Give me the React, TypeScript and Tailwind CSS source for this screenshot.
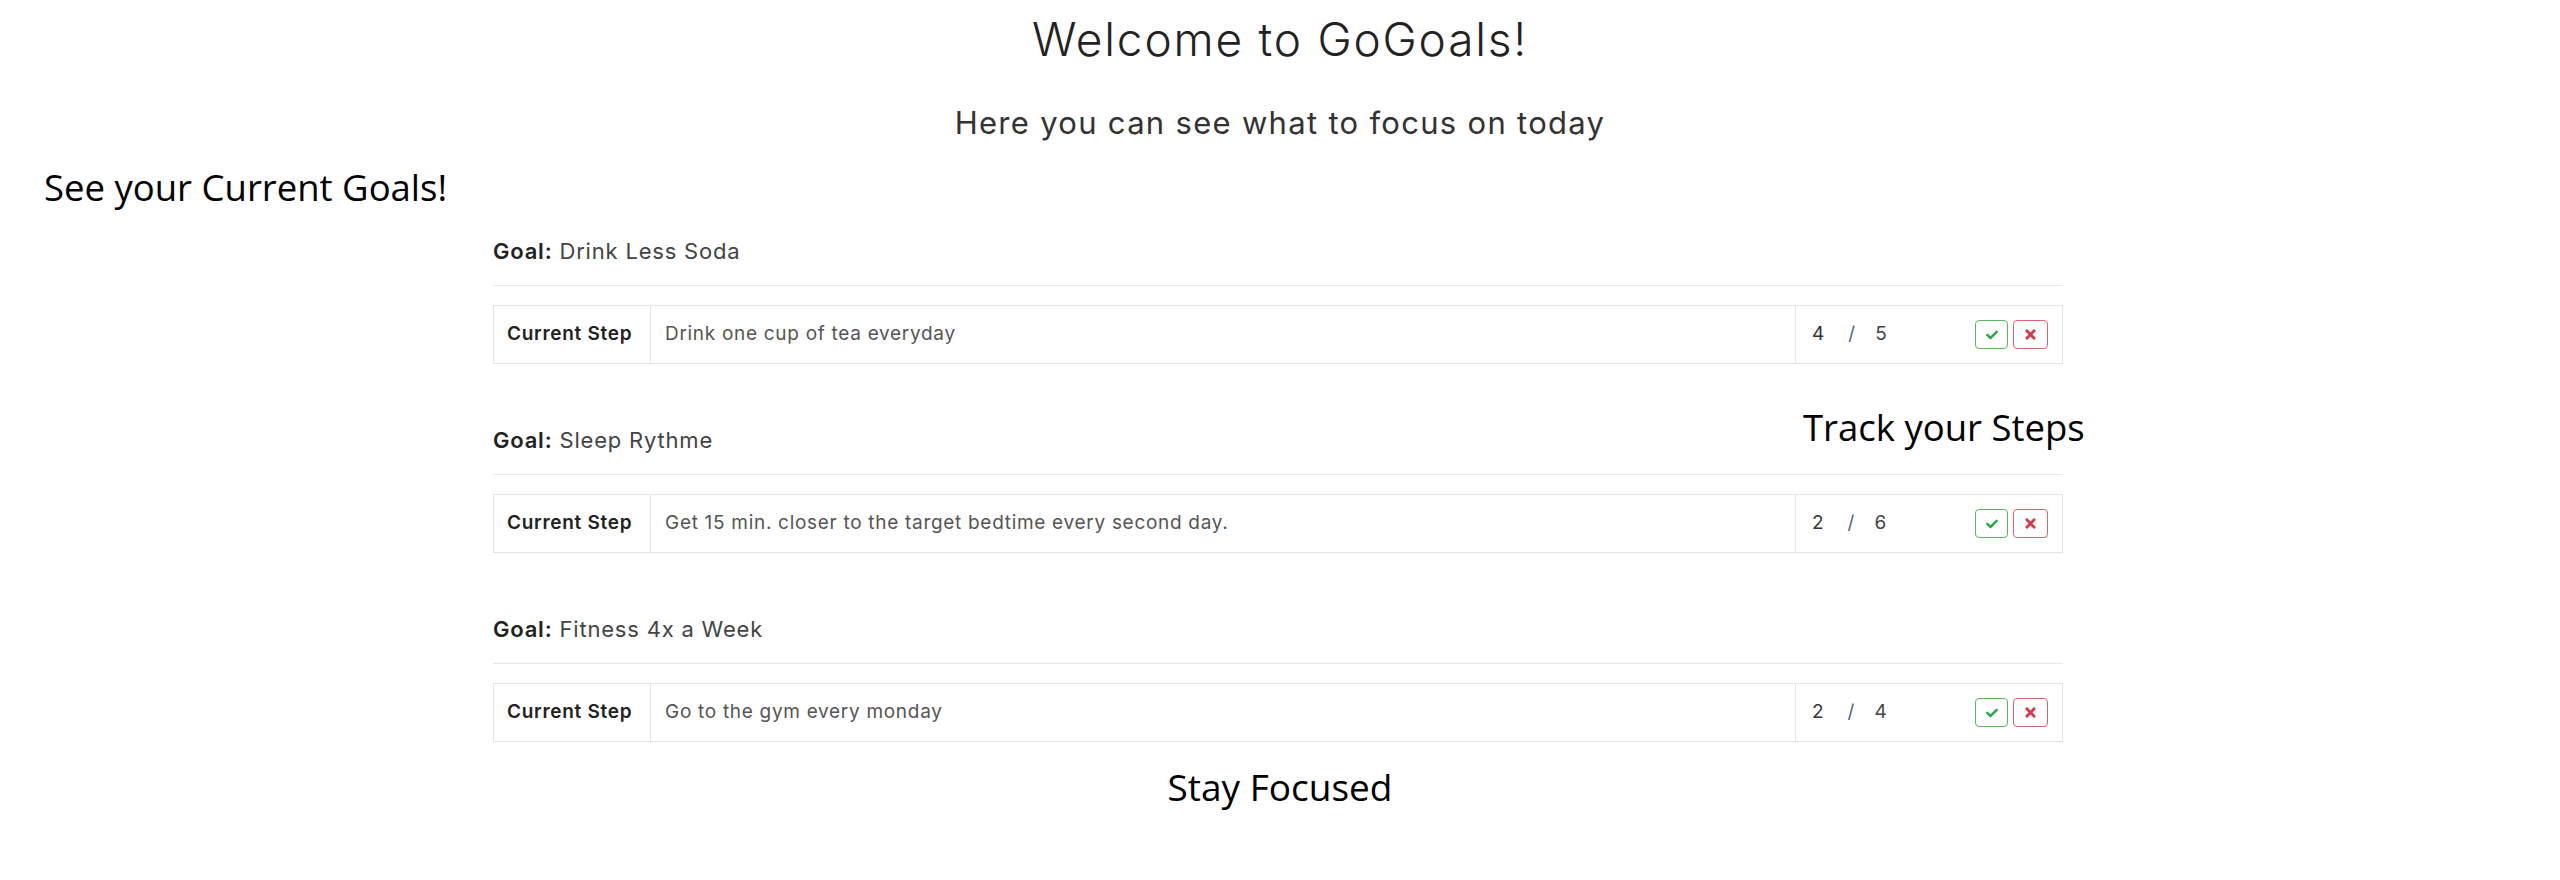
import React from "react";
import { FaCheck, FaTimes } from "react-icons/fa";

type Goal = {
  title: string;
  step: string;
  done: number;
  total: number;
};

const goals: Goal[] = [
  { title: "Drink Less Soda", step: "Drink one cup of tea everyday", done: 4, total: 5 },
  { title: "Sleep Rythme", step: "Get 15 min. closer to the target bedtime every second day.", done: 2, total: 6 },
  { title: "Fitness 4x a Week", step: "Go to the gym every monday", done: 2, total: 4 },
];

const sans = "font-['Inter','Noto_Sans',sans-serif]";
const note = "font-['Open_Sans','Noto_Sans',sans-serif] text-black leading-[44px]";

const GoalCard: React.FC<{ goal: Goal }> = ({ goal }) => (
  <div>
    <div className="border-b border-[#e6e6e6] pb-[20px] text-[22px] leading-[28px] tracking-[0.8px] text-[#444]">
      <span className="font-semibold text-[#222]">Goal:</span> {goal.title}
    </div>
    <div className="mt-[19px] flex h-[59px] border border-[#e3e3e3] text-[19px] tracking-[0.7px]">
      <div className="flex w-[157px] items-center border-r border-[#e3e3e3] pl-[13px] font-semibold text-[#222]">
        Current Step
      </div>
      <div className="flex flex-1 items-center border-r border-[#e3e3e3] pl-[14px] text-[#555]">
        {goal.step}
      </div>
      <div className="flex w-[266px] items-center pl-[16px] pr-[14px] tracking-normal">
        <span className="text-[#333]">{goal.done}</span>
        <span className="ml-[24px] text-[#4b6584]">/</span>
        <span className="ml-[20px] text-[#444]">{goal.total}</span>
        <div className="ml-auto flex gap-[5px]">
          <button className="flex h-[29px] w-[33px] items-center justify-center rounded-[4px] border border-[#5cb85c] text-[#28a745]">
            <FaCheck size={12} />
          </button>
          <button className="flex h-[29px] w-[35px] items-center justify-center rounded-[4px] border border-[#e0636f] text-[#dc3545]">
            <FaTimes size={15} />
          </button>
        </div>
      </div>
    </div>
  </div>
);

const App: React.FC = () => {
  return (
    <div className={`relative min-h-[880px] w-full bg-white ${sans}`}>
      <h1 className="pt-[17px] text-center text-[46px] font-light leading-[44px] tracking-[1.8px] text-[#222]">
        Welcome to GoGoals!
      </h1>
      <p className="mt-[44px] text-center text-[31px] leading-[36px] tracking-[1.3px] text-[#333]">
        Here you can see what to focus on today
      </p>

      <div className={`mt-[24px] pl-[44px] text-[36.5px] ${note}`}>See your Current Goals!</div>

      <div className="mx-auto mt-[28px] w-[1574px] pr-[4px]">
        <div className="flex flex-col gap-[62px]">
          {goals.map((g) => (
            <GoalCard key={g.title} goal={g} />
          ))}
        </div>
      </div>

      <div className={`mt-[23px] text-center text-[37px] ${note}`}>Stay Focused</div>

      {/* annotation floating over the list */}
      <div className={`absolute left-[1803px] top-[405px] text-[36.5px] ${note}`}>Track your Steps</div>
    </div>
  );
};

export default App;
